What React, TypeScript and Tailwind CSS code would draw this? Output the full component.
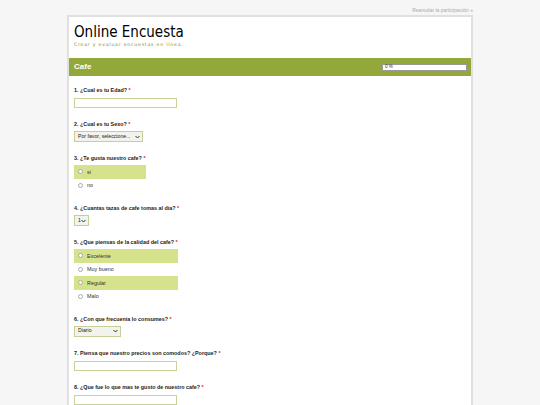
import React from "react";

const Req = () => <span className="text-[#e02020]"> *</span>;

function Label({ children }: { children: React.ReactNode }) {
  return (
    <div className="h-[8px] leading-[8px] text-[5.4px] font-bold text-[#222]">
      {children}
      <Req />
    </div>
  );
}

function TextInput() {
  return <div className="mt-[4px] h-[10px] w-[103px] border border-[#c9d29a] bg-white" />;
}

function Select({ text, w }: { text: string; w: string }) {
  return (
    <div
      className={`mt-[3px] flex h-[11px] items-center justify-between border border-[#c6cf98] bg-[#f3f3ee] pl-[3px] pr-[2px] text-[5.2px] text-[#222] ${w}`}
    >
      <span>{text}</span>
      <svg width="5" height="4" viewBox="0 0 10 8">
        <path d="M1 2 L5 6 L9 2" fill="none" stroke="#333" strokeWidth="2" />
      </svg>
    </div>
  );
}

function Radio({ text, hl, w }: { text: string; hl?: boolean; w: string }) {
  return (
    <div className={`flex h-[13.5px] items-center gap-[4px] pl-[4px] ${w} ${hl ? "bg-[#d7e28c]" : ""}`}>
      <span className="h-[5px] w-[5px] rounded-full border border-[#aaa] bg-white" />
      <span className="text-[5.4px] text-[#333]">{text}</span>
    </div>
  );
}

export default function App() {
  return (
    <div
      className="h-[405px] w-[540px] overflow-hidden bg-[#f6f6f6]"
      style={{ fontFamily: '"Liberation Sans", Arial, sans-serif' }}
    >
      <div className="mx-auto w-[406px]">
        <div className="flex h-[15px] items-start justify-end pt-[7px] text-[5px] leading-[6px] text-[#aaa]">
          Reanudar la participación »
        </div>
        <div className="border-x-2 border-t-2 border-[#e0e0e0] bg-white">
          <div className="h-[41px] px-[5px] pt-[7px]">
            <div
              className="text-[15px] leading-[17px] text-[#000]"
              style={{ fontFamily: '"DejaVu Sans Condensed", "DejaVu Sans", sans-serif' }}
            >
              Online Encuesta
            </div>
            <div
              className="mt-[1px] text-[4.6px] leading-[6px] tracking-[0.8px] text-[#7d8f2c]"
              style={{ fontFamily: '"DejaVu Sans", sans-serif' }}
            >
              Crear y evaluar encuestas en línea.
            </div>
          </div>
          <div className="flex h-[18px] items-center justify-between bg-[#93a83b] pl-[5px] pr-[4px]">
            <span className="text-[8px] font-bold text-white">Cafe</span>
            <div className="flex h-[7px] w-[85px] items-center border border-[#999] bg-white pl-[2px] text-[4.5px] text-[#333]">
              0 %
            </div>
          </div>
          <div className="px-[5px] pt-[10px]">
            <div className="mb-[12px]">
              <Label>1. ¿Cual es tu Edad?</Label>
              <TextInput />
            </div>
            <div className="mb-[12px]">
              <Label>2. ¿Cual es tu Sexo?</Label>
              <Select text="Por favor, seleccione..." w="w-[69px]" />
            </div>
            <div className="mb-[12px]">
              <Label>3. ¿Te gusta nuestro cafe?</Label>
              <div className="mt-[3px]">
                <Radio text="si" hl w="w-[72px]" />
                <Radio text="no" w="w-[72px]" />
              </div>
            </div>
            <div className="mb-[12px]">
              <Label>4. ¿Cuantas tazas de cafe tomas al dia?</Label>
              <Select text="1" w="w-[15px]" />
            </div>
            <div className="mb-[11.5px]">
              <Label>5. ¿Que piensas de la calidad del cafe?</Label>
              <div className="mt-[3px]">
                <Radio text="Excelente" hl w="w-[104px]" />
                <Radio text="Muy bueno" w="w-[104px]" />
                <Radio text="Regular" hl w="w-[104px]" />
                <Radio text="Malo" w="w-[104px]" />
              </div>
            </div>
            <div className="mb-[12px]">
              <Label>6. ¿Con que frecuenia lo consumes?</Label>
              <Select text="Diario" w="w-[47px]" />
            </div>
            <div className="mb-[12px]">
              <Label>7. Piensa que nuestro precios son comodos? ¿Porque?</Label>
              <TextInput />
            </div>
            <div className="mb-[12px]">
              <Label>8. ¿Que fue lo que mas te gusto de nuestro cafe?</Label>
              <TextInput />
            </div>
          </div>
        </div>
      </div>
    </div>
  );
}
